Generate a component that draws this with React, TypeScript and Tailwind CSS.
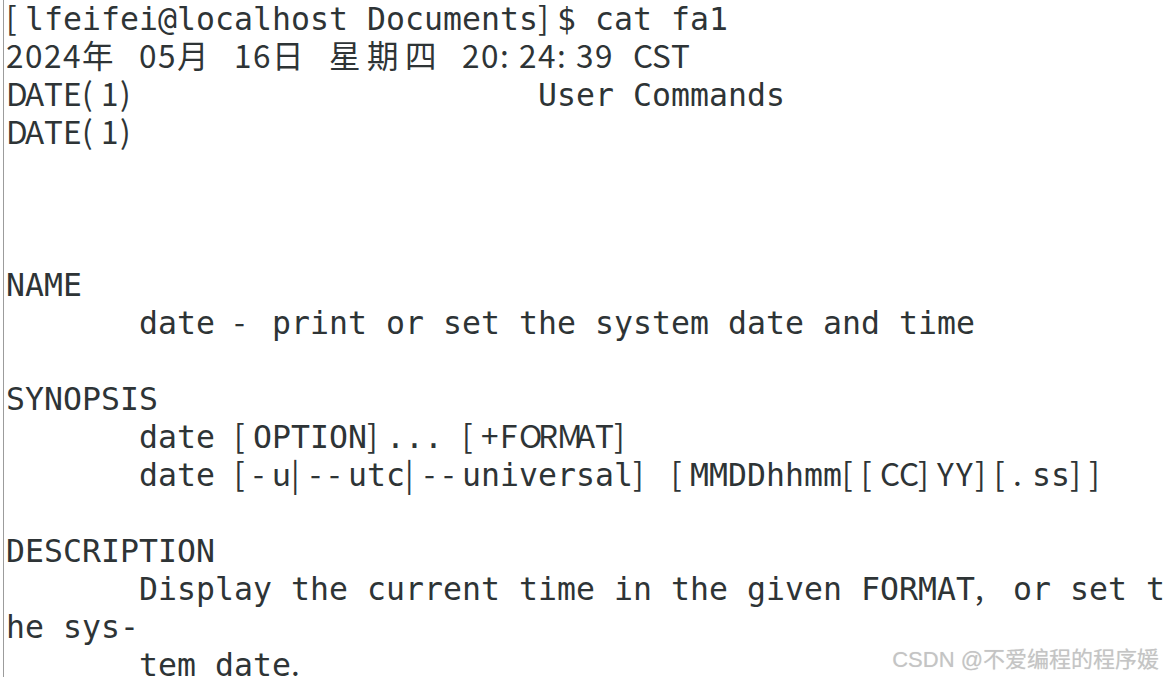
import React from "react";

const LINES: string[] = [
  "{[}lfeifei@localhost Documents{]}$ cat fa1",
  "{2024年 05月 16日 星期四 20:24:39 CST}",
  "{DATE(1)}                     User Commands",
  "{DATE(1)}",
  "",
  "",
  "",
  "NAME",
  "       date {-} print or set the system date and time",
  "",
  "SYNOPSIS",
  "       date {[}OPTION{]}... {[+FORMAT]}",
  "       date {[-u|--}utc{|--}universal{]} {[}MMDDhhmm{[[CC]YY][.}ss{]]}",
  "",
  "DESCRIPTION",
  "       Display the current time in the given FORMAT{,} or set t",
  "he sys-",
  "       tem date{.}",
];

type Cell = { ch: string; alt: boolean; wide: boolean };

function parse(line: string): Cell[] {
  const cells: Cell[] = [];
  let alt = false;
  for (const ch of Array.from(line)) {
    if (ch === "{") {
      alt = true;
      continue;
    }
    if (ch === "}") {
      alt = false;
      continue;
    }
    const wide = (ch.codePointAt(0) ?? 0) > 0x2e80;
    cells.push({ ch, alt, wide });
  }
  return cells;
}

function Row({ line }: { line: string }) {
  const cells = parse(line);
  return (
    <div className="h-[38px] leading-[38px] whitespace-pre">
      {cells.map((c, i) => {
        const w = c.wide ? "w-[38px]" : "w-[19px]";
        if (c.alt) {
          return (
            <span
              key={i}
              className={`inline-block ${w} leading-none font-['Noto_Sans_CJK_SC','Noto_Sans',sans-serif]`}
            >
              {c.ch}
            </span>
          );
        }
        return (
          <span key={i} className={`inline-block ${w}`}>
            {c.ch}
          </span>
        );
      })}
    </div>
  );
}

export default function App() {
  return (
    <div className="relative w-[1164px] h-[677px] overflow-hidden bg-white">
      <div className="ml-[3px] h-full border-l border-[#9c9c9c] pl-[2px] text-[31.5px] text-[#2e3436] font-['DejaVu_Sans_Mono',monospace]">
        {LINES.map((l, i) => (
          <Row key={i} line={l} />
        ))}
      </div>
      <div className="absolute right-[5px] bottom-[6px] text-[22px] leading-none text-[#c4c4c4] font-['Liberation_Sans','Noto_Sans_CJK_SC',sans-serif] [text-shadow:0_0_1px_#e0e0e0]">
        CSDN @不爱编程的程序媛
      </div>
    </div>
  );
}
